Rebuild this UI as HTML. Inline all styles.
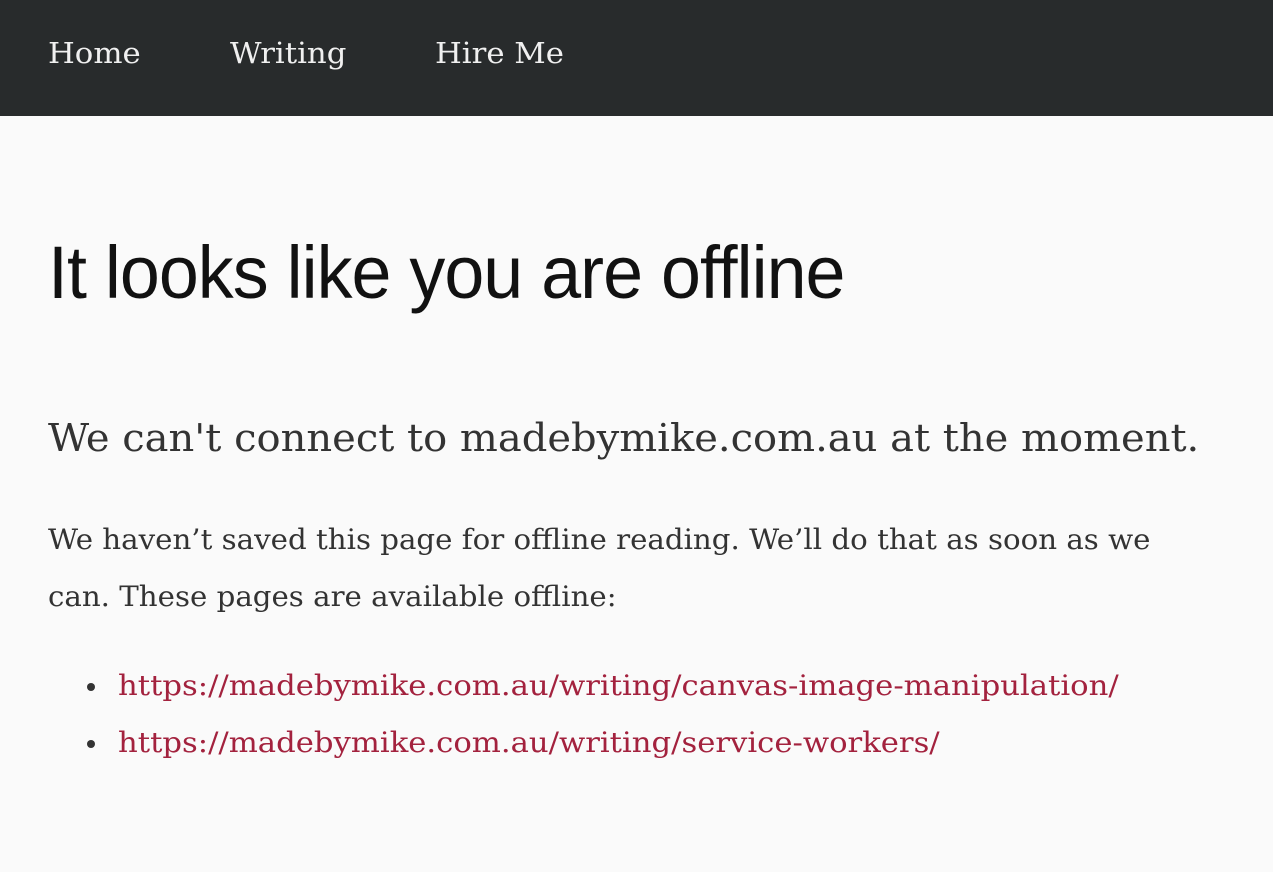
<!DOCTYPE html>
<html><head><meta charset="utf-8"><style>
html,body{margin:0;padding:0;background:#fafafa;width:1273px;height:872px;overflow:hidden}
nav{background:#282b2c;height:116px;position:relative}
nav a{position:absolute;top:36px;color:#f0f0f0;font-family:"DejaVu Serif",serif;font-size:29px;text-decoration:none;transform-origin:left top;transform:scaleX(1.06)}
h1{position:absolute;left:48px;top:230px;margin:0;font-family:"Liberation Sans",sans-serif;font-weight:normal;font-size:74px;color:#111;white-space:nowrap;transform-origin:left top;transform:scaleX(0.97);letter-spacing:-1px}
.s{position:absolute;left:48px;margin:0;font-family:"DejaVu Serif",serif;color:#333;white-space:nowrap;transform-origin:left top}
h2.s{top:416px;font-size:38px;font-weight:normal;transform:scaleX(1.053)}
.p{font-size:28px}
.li a{color:#a3223e;text-decoration:none}
.dot{position:absolute;left:87px;width:8px;height:8px;border-radius:50%;background:#333}
</style></head><body>
<nav><a style="left:48px">Home</a><a style="left:230px">Writing</a><a style="left:435px">Hire Me</a></nav>
<h1>It looks like you are offline</h1>
<h2 class="s">We can't connect to madebymike.com.au at the moment.</h2>
<div class="s p" style="top:523px;transform:scaleX(1.045)">We haven’t saved this page for offline reading. We’ll do that as soon as we</div>
<div class="s p" style="top:580px;transform:scaleX(1.045)">can. These pages are available offline:</div>
<div class="dot" style="top:683px"></div>
<div class="dot" style="top:740px"></div>
<div class="s p li" style="left:118px;top:669px;transform:scaleX(1.095)"><a>https://madebymike.com.au/writing/canvas-image-manipulation/</a></div>
<div class="s p li" style="left:118px;top:726px;transform:scaleX(1.095)"><a>https://madebymike.com.au/writing/service-workers/</a></div>
</body></html>
